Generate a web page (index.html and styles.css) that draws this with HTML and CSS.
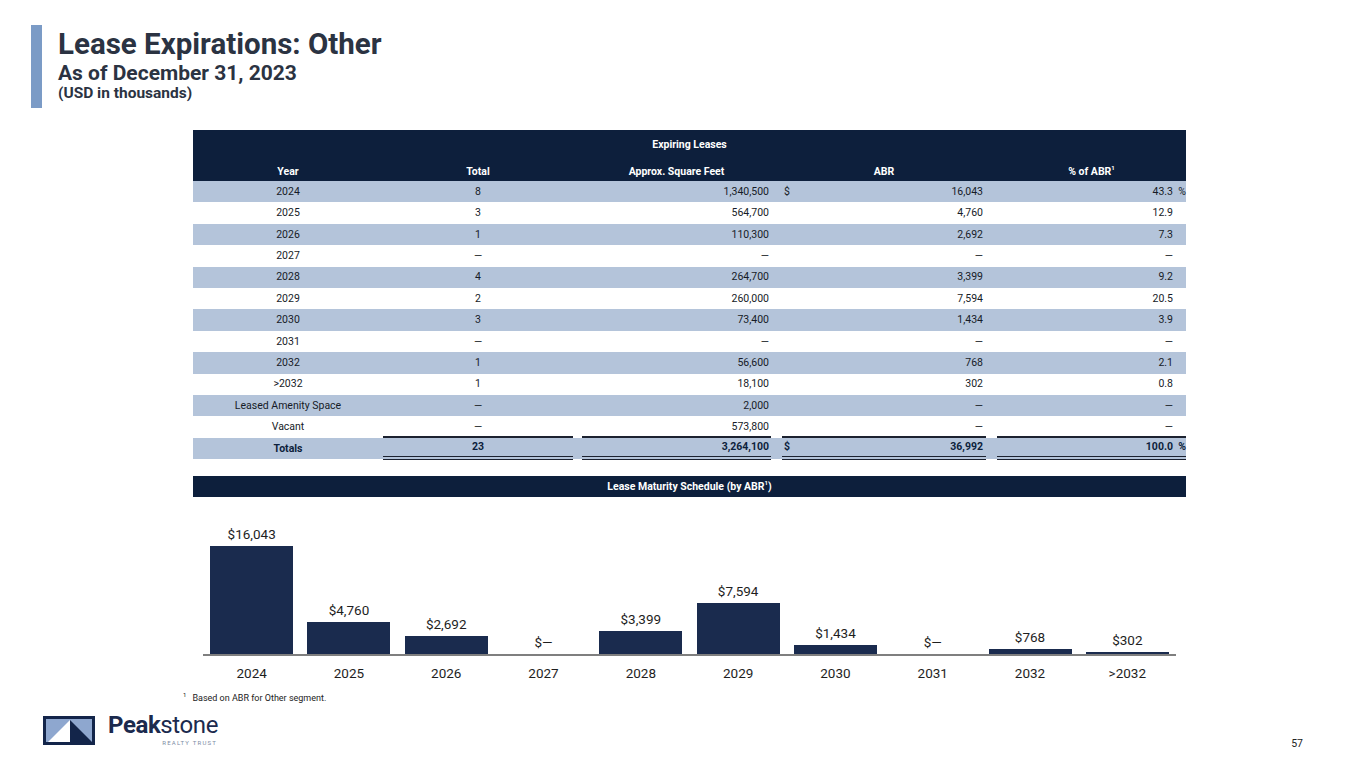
FILE: index.html
```html
<!DOCTYPE html>
<html lang="en">
<head>
<meta charset="utf-8">
<title>Lease Expirations: Other</title>
<link rel="stylesheet" href="styles.css">
</head>
<body>
<div class="page">
  <header class="title-block">
    <div class="accent"></div>
    <div class="titles">
      <h1>Lease Expirations: Other</h1>
      <h2>As of December 31, 2023</h2>
      <p class="units">(USD in thousands)</p>
    </div>
  </header>

  <section class="content">
    <div class="ltable">
      <div class="thead">
        <div class="band">Expiring Leases</div>
        <div class="row head">
          <div class="c1">Year</div>
          <div class="c2">Total</div>
          <div class="c3 center">Approx. Square Feet</div>
          <div class="c4 center">ABR</div>
          <div class="c5 center">% of ABR<sup>1</sup></div>
        </div>
      </div>

      <div class="row alt"><div class="c1">2024</div><div class="c2">8</div><div class="c3">1,340,500</div><div class="c4"><span>$</span><span>16,043</span></div><div class="c5"><span>43.3</span><span class="sign">%</span></div></div>
      <div class="row"><div class="c1">2025</div><div class="c2">3</div><div class="c3">564,700</div><div class="c4"><span></span><span>4,760</span></div><div class="c5"><span>12.9</span><span class="sign"></span></div></div>
      <div class="row alt"><div class="c1">2026</div><div class="c2">1</div><div class="c3">110,300</div><div class="c4"><span></span><span>2,692</span></div><div class="c5"><span>7.3</span><span class="sign"></span></div></div>
      <div class="row"><div class="c1">2027</div><div class="c2">—</div><div class="c3">—</div><div class="c4"><span></span><span>—</span></div><div class="c5"><span>—</span><span class="sign"></span></div></div>
      <div class="row alt"><div class="c1">2028</div><div class="c2">4</div><div class="c3">264,700</div><div class="c4"><span></span><span>3,399</span></div><div class="c5"><span>9.2</span><span class="sign"></span></div></div>
      <div class="row"><div class="c1">2029</div><div class="c2">2</div><div class="c3">260,000</div><div class="c4"><span></span><span>7,594</span></div><div class="c5"><span>20.5</span><span class="sign"></span></div></div>
      <div class="row alt"><div class="c1">2030</div><div class="c2">3</div><div class="c3">73,400</div><div class="c4"><span></span><span>1,434</span></div><div class="c5"><span>3.9</span><span class="sign"></span></div></div>
      <div class="row"><div class="c1">2031</div><div class="c2">—</div><div class="c3">—</div><div class="c4"><span></span><span>—</span></div><div class="c5"><span>—</span><span class="sign"></span></div></div>
      <div class="row alt"><div class="c1">2032</div><div class="c2">1</div><div class="c3">56,600</div><div class="c4"><span></span><span>768</span></div><div class="c5"><span>2.1</span><span class="sign"></span></div></div>
      <div class="row"><div class="c1">&gt;2032</div><div class="c2">1</div><div class="c3">18,100</div><div class="c4"><span></span><span>302</span></div><div class="c5"><span>0.8</span><span class="sign"></span></div></div>
      <div class="row alt"><div class="c1">Leased Amenity Space</div><div class="c2">—</div><div class="c3">2,000</div><div class="c4"><span></span><span>—</span></div><div class="c5"><span>—</span><span class="sign"></span></div></div>
      <div class="row"><div class="c1">Vacant</div><div class="c2">—</div><div class="c3">573,800</div><div class="c4"><span></span><span>—</span></div><div class="c5"><span>—</span><span class="sign"></span></div></div>
      <div class="row alt totals"><div class="c1">Totals</div><div class="c2 ruled">23</div><div class="c3 ruled">3,264,100</div><div class="c4 ruled"><span>$</span><span>36,992</span></div><div class="c5 ruled"><span>100.0</span><span class="sign">%</span></div></div>
    </div>

    <div class="band section-band">Lease Maturity Schedule (by ABR<sup>1</sup>)</div>

    <div class="chart">
      <div class="plot">
        <div class="col"><span class="val">$16,043</span><div class="bar" style="height:108px"></div></div>
        <div class="col"><span class="val">$4,760</span><div class="bar" style="height:32px"></div></div>
        <div class="col"><span class="val">$2,692</span><div class="bar" style="height:18px"></div></div>
        <div class="col"><span class="val">$—</span><div class="bar" style="height:0px"></div></div>
        <div class="col"><span class="val">$3,399</span><div class="bar" style="height:23px"></div></div>
        <div class="col"><span class="val">$7,594</span><div class="bar" style="height:51px"></div></div>
        <div class="col"><span class="val">$1,434</span><div class="bar" style="height:9px"></div></div>
        <div class="col"><span class="val">$—</span><div class="bar" style="height:0px"></div></div>
        <div class="col"><span class="val">$768</span><div class="bar" style="height:5px"></div></div>
        <div class="col"><span class="val">$302</span><div class="bar" style="height:2px"></div></div>
      </div>
      <div class="xlabels">
        <span>2024</span><span>2025</span><span>2026</span><span>2027</span><span>2028</span>
        <span>2029</span><span>2030</span><span>2031</span><span>2032</span><span>&gt;2032</span>
      </div>
    </div>
  </section>

  <p class="footnote"><sup>1</sup>Based on ABR for Other segment.</p>

  <footer class="footer">
    <div class="brand">
      <svg class="logo-mark" width="52" height="29" viewBox="0 0 52 29" aria-hidden="true">
        <rect x="0" y="0" width="52" height="29" fill="#13254a"/>
        <rect x="3" y="3" width="46" height="23" fill="#8ea7cf"/>
        <polygon points="5,26 27,4 27,26" fill="#ffffff"/>
        <polygon points="27,4 49,26 27,26" fill="#13254a"/>
      </svg>
      <div class="wordmark">
        <span class="name"><b>Peak</b>stone</span>
        <span class="tag">REALTY TRUST</span>
      </div>
    </div>
    <div class="page-num">57</div>
  </footer>
</div>
</body>
</html>
```

FILE: styles.css
```css
* { box-sizing: border-box; }

body {
  margin: 0;
  background: #ffffff;
  font-family: Roboto, "Noto Sans", "DejaVu Sans", sans-serif;
  color: #1c2230;
}

.page {
  width: 1365px;
  height: 768px;
  overflow: hidden;
  position: relative;
}

/* Title */
.title-block {
  display: flex;
  gap: 16px;
  margin: 25px 0 0 31px;
  height: 83px;
}
.accent {
  width: 11px;
  background: #7b9bc6;
}
.titles {
  padding-top: 2px;
  color: #2b3342;
}
.titles h1 {
  margin: 0;
  font-size: 29.5px;
  line-height: 34px;
  font-weight: 700;
}
.titles h2 {
  margin: 1px 0 0;
  font-size: 21px;
  line-height: 22px;
  font-weight: 700;
}
.titles .units {
  margin: 0;
  font-size: 15.5px;
  line-height: 18px;
  font-weight: 700;
}

/* Content */
.content {
  margin: 22px 0 0 193px;
  width: 993px;
}

.band {
  background: #0d1f3c;
  color: #ffffff;
  font-weight: 700;
  font-size: 10.5px;
  text-align: center;
}
.thead {
  background: #0d1f3c;
}
.thead .band {
  height: 29px;
  line-height: 29px;
}
.band sup, .row sup {
  font-size: 6px;
  vertical-align: 5px;
  line-height: 0;
}

.row {
  display: grid;
  grid-template-columns: 190px 190px 9px 189px 11px 204px 11px 189px;
  height: 21.42px;
  align-items: center;
  font-size: 10.5px;
  line-height: 12px;
  color: #161b27;
}
.row.alt { background: #b4c4da; }
.row.head {
  height: 22px;
  padding-top: 3px;
  color: #ffffff;
  font-weight: 700;
}

.c1 { grid-column: 1; text-align: center; }
.c2 { grid-column: 2; text-align: center; }
.c3 { grid-column: 4; text-align: right; padding-right: 2px; }
.c4 {
  grid-column: 6;
  display: flex;
  justify-content: space-between;
  padding: 0 3px 0 2px;
}
.c5 {
  grid-column: 8;
  display: flex;
  justify-content: flex-end;
}
.c5 .sign {
  width: 13px;
  text-align: right;
}
.row.head .c3, .row.head .c4, .row.head .c5 {
  display: block;
  text-align: center;
  padding: 0;
}

.totals {
  font-weight: 700;
  color: #0d1f3c;
}
.totals > div {
  height: 100%;
  display: flex;
  align-items: center;
}
.totals .c1, .totals .c2 { justify-content: center; }
.totals .c3 { justify-content: flex-end; }
.totals .c4 { justify-content: space-between; }
.totals .c5 { justify-content: flex-end; }
.ruled {
  border-top: 2px solid #1c2230;
  border-bottom: 4px double #1c2230;
  margin-top: -1px;
  height: calc(100% + 3px) !important;
}

.section-band {
  margin-top: 17px;
  height: 21px;
  line-height: 21px;
}

/* Chart */
.chart {
  margin-left: 10px;
  width: 973px;
}
.plot {
  display: flex;
  height: 159px;
  border-bottom: 2px solid #7f7f7f;
}
.col {
  flex: 1;
  display: flex;
  flex-direction: column;
  justify-content: flex-end;
  align-items: center;
}
.val {
  font-size: 13.5px;
  line-height: 16px;
  margin-bottom: 4px;
  color: #1e1e1e;
}
.bar {
  width: 83px;
  background: #1a2b4e;
}
.xlabels {
  display: flex;
  margin-top: 9px;
}
.xlabels span {
  flex: 1;
  text-align: center;
  font-size: 13.5px;
  line-height: 16px;
  color: #1e1e1e;
}

/* Footnote */
.footnote {
  margin: 11px 0 0 183px;
  font-size: 9px;
  line-height: 12px;
  color: #222222;
}
.footnote sup {
  font-size: 6px;
  vertical-align: 4px;
  line-height: 0;
  margin-right: 6px;
}

/* Footer */
.footer {
  display: flex;
  justify-content: space-between;
  align-items: flex-start;
  margin-top: 12px;
  padding: 0 62px 0 43px;
}
.brand {
  display: flex;
  align-items: flex-start;
  gap: 13px;
}
.logo-mark { display: block; }
.wordmark {
  display: flex;
  flex-direction: column;
  align-items: flex-end;
  margin-top: -3px;
  color: #1b2a4e;
}
.wordmark .name {
  font-size: 24px;
  line-height: 24px;
  letter-spacing: -0.4px;
}
.wordmark .name b { font-weight: 700; }
.wordmark .tag {
  font-size: 6px;
  line-height: 7px;
  letter-spacing: 1.2px;
  color: #7d8ca4;
  margin-top: 2px;
  margin-right: 1px;
}
.page-num {
  margin-top: 22px;
  font-size: 10.5px;
  line-height: 12px;
  color: #222222;
}
```
